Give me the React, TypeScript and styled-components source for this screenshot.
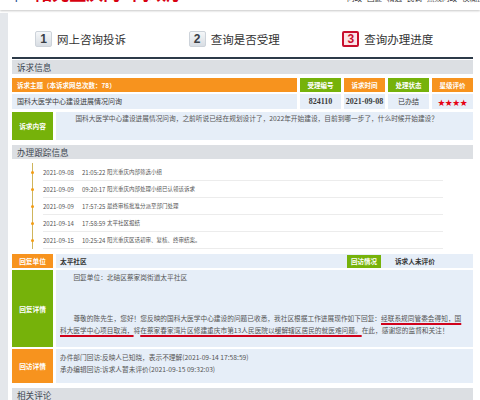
import React from 'react';
import styled, { createGlobalStyle } from 'styled-components';

const GlobalStyle = createGlobalStyle`
  html, body {
    margin: 0;
    padding: 0;
    background: #fff;
  }
  body {
    font-family: "Noto Sans CJK SC", "Noto Sans", sans-serif;
    color: #333;
    overflow: hidden;
  }
`;

const ORANGE = '#f7931e';
const GREEN = '#76b20a';
const PALE = '#e6eef8';

const TopBar = styled.header`
  position: relative;
  z-index: 2;
  height: 10px;
  overflow: hidden;
  display: flex;
  align-items: flex-end;
  background: #fff;
  box-shadow: 0 1px 2px rgba(0, 0, 0, 0.22);
`;

const Logo = styled.span`
  margin: 0 6px 8px 8px;
  font: bold 8px/9px "Liberation Sans", sans-serif;
  color: #1d4f91;
`;

const SiteTitle = styled.span`
  display: flex;
  gap: 12px;
  margin-bottom: 8px;
  font-size: 17px;
  line-height: 18px;
  font-weight: bold;
  color: #d7000f;
  white-space: nowrap;
`;

const Nav = styled.nav`
  margin-left: auto;
  margin-right: -12px;
  margin-bottom: 8px;
  display: flex;
  gap: 5px;
  font-size: 7.5px;
  line-height: 8px;
  color: #333;
  white-space: nowrap;
`;

const Page = styled.div`
  display: flex;
  margin-top: 3px;
`;

const Strip = styled.div`
  width: 8px;
  flex: none;
  background: #e4e7eb;
`;

const Main = styled.main`
  flex: 1;
  min-width: 0;
  padding: 0 7px 0 4px;
`;

const Steps = styled.div`
  display: grid;
  grid-template-columns: repeat(3, 1fr);
  align-items: center;
  height: 46px;
  box-sizing: border-box;
  padding-top: 7px;
  border-bottom: 2px solid #2c3a48;
`;

const Step = styled.div`
  display: flex;
  align-items: center;
  gap: 5px;
  padding-left: 23px;
`;

const StepNum = styled.span<{ $active?: boolean }>`
  width: 17px;
  height: 16px;
  box-sizing: border-box;
  display: flex;
  align-items: center;
  justify-content: center;
  border-radius: 2px;
  font: bold 12px/1 "Liberation Sans", sans-serif;
  color: ${p => (p.$active ? '#c8102e' : '#3a3f46')};
  background: ${p => (p.$active ? '#fce4e7' : 'linear-gradient(#f5f7f9, #d8dde3)')};
  border: ${p => (p.$active ? '2px solid #c8102e' : '1px solid #cdd3da')};
`;

const StepLabel = styled.span`
  font-size: 11.5px;
  line-height: 14px;
  color: #333;
`;

const SectionTitle = styled.h3<{ $mt: number }>`
  margin: ${p => p.$mt}px 0 0;
  height: 14px;
  line-height: 14px;
  padding-left: 5px;
  background: #dcdfe3;
  font-size: 8.6px;
  font-weight: normal;
  color: #3c4650;
`;

const InfoGrid = styled.div`
  display: grid;
  grid-template-columns: 1fr repeat(4, 41px);
  column-gap: 3px;
  row-gap: 2px;
  margin-top: 4px;
`;

const HeadCell = styled.div<{ $tone: 'orange' | 'green'; $left?: boolean }>`
  height: 14px;
  line-height: 14px;
  padding-left: ${p => (p.$left ? '5px' : '0')};
  text-align: ${p => (p.$left ? 'left' : 'center')};
  background: ${p => (p.$tone === 'orange' ? ORANGE : GREEN)};
  color: #fff;
  font-size: 6.5px;
  font-weight: bold;
  white-space: nowrap;
`;

const ValueCell = styled.div<{ $left?: boolean; $serif?: boolean; $stars?: boolean }>`
  height: 15px;
  line-height: 15px;
  padding-left: ${p => (p.$left ? '5px' : '0')};
  text-align: ${p => (p.$left ? 'left' : 'center')};
  background: ${PALE};
  color: ${p => (p.$stars ? '#e60012' : '#3a3a3a')};
  font-family: ${p => (p.$serif ? '"Liberation Serif", serif' : 'inherit')};
  font-size: ${p => (p.$serif ? '8px' : p.$stars ? '7.4px' : '7px')};
  font-weight: ${p => (p.$serif ? 'bold' : 'normal')};
  white-space: nowrap;
`;

const Row = styled.div<{ $h: number; $mt?: number }>`
  display: grid;
  grid-template-columns: 41px 1fr;
  column-gap: 3px;
  height: ${p => p.$h}px;
  margin-top: ${p => p.$mt ?? 0}px;
`;

const Label = styled.div<{ $tone: 'orange' | 'green' }>`
  display: flex;
  align-items: center;
  justify-content: center;
  background: ${p => (p.$tone === 'orange' ? ORANGE : GREEN)};
  color: #fff;
  font-size: 6.7px;
  font-weight: bold;
`;

const Cell = styled.div`
  background: ${PALE};
  font-size: 6.7px;
  color: #555;
  overflow: hidden;
`;

const AskText = styled(Cell)`
  padding: 2px 6px 0;
  line-height: 8px;
  text-indent: 2em;
  white-space: nowrap;
`;

const Timeline = styled.ul`
  list-style: none;
  margin: 4px 30px 0 20px;
  padding: 1px 0 0;
  border-left: 1px solid #cfb55c;
`;

const Event = styled.li`
  position: relative;
  margin-left: 10px;
  height: 17px;
  box-sizing: border-box;
  display: flex;
  align-items: center;
  border-bottom: 1px solid #ececec;
  font-size: 5.5px;
  color: #555;
  white-space: nowrap;

  &::before {
    content: '';
    position: absolute;
    left: -12px;
    top: 7px;
    width: 3px;
    height: 3px;
    border-radius: 50%;
    background: #f39c12;
  }
`;

const EventDate = styled.span`
  width: 39px;
  flex: none;
  font-size: 6px;
`;

const EventTime = styled.span`
  width: 25px;
  flex: none;
  font-size: 6px;
`;

const ReplyTable = styled.div`
  display: grid;
  row-gap: 2px;
  margin-top: 5px;
`;

const UnitCell = styled(Cell)`
  display: flex;
  align-items: center;
  padding-left: 4px;
  color: #333;
  font-weight: bold;
`;

const VisitButton = styled.span`
  margin-left: auto;
  width: 34px;
  height: 13px;
  line-height: 13px;
  text-align: center;
  background: ${GREEN};
  color: #fff;
  font-size: 6.5px;
`;

const Rating = styled.span`
  margin: 0 38px 0 14px;
  color: #333;
`;

const Detail = styled(Cell)`
  padding: 1px 4px 0;
  line-height: 12.5px;
  white-space: nowrap;

  p {
    margin: 0;
  }
  p + p {
    margin-top: 28px;
  }
`;

const Indent = styled.span`
  padding-left: 2em;
`;

const Mark = styled.span`
  text-decoration: underline;
  text-decoration-color: #d0021b;
  text-decoration-thickness: 1.6px;
  text-underline-offset: 2px;
`;

const Visits = styled(Cell)`
  padding: 2px 4px 0;
  line-height: 12px;
  white-space: nowrap;
`;

const steps = ['网上咨询投诉', '查询是否受理', '查询办理进度'];

const events = [
  ['2021-09-08', '21:05:22', '阳光重庆内部筛选小组'],
  ['2021-09-09', '09:20:17', '阳光重庆内部处理小组已认领该诉求'],
  ['2021-09-09', '17:57:25', '最终审核批准分派至部门处理'],
  ['2021-09-14', '17:58:59', '太平社区报结'],
  ['2021-09-15', '10:25:24', '阳光重庆区话初审、复核、终审结案。'],
];

const navItems = ['问政', '回复', '精选', '民调', '热线问政', '模糊搜索'];

export default function App() {
  return (
    <>
      <GlobalStyle />
      <TopBar>
        <Logo>cqnet</Logo>
        <SiteTitle>
          <span>阳光重庆网</span>
          <span>问政厅</span>
        </SiteTitle>
        <Nav>
          {navItems.map(n => (
            <span key={n}>{n}</span>
          ))}
        </Nav>
      </TopBar>
      <Page>
        <Strip />
        <Main>
          <Steps>
            {steps.map((s, i) => (
              <Step key={s}>
                <StepNum $active={i === 2}>{i + 1}</StepNum>
                <StepLabel>{s}</StepLabel>
              </Step>
            ))}
          </Steps>

          <SectionTitle $mt={1}>诉求信息</SectionTitle>
          <InfoGrid>
            <HeadCell $tone="orange" $left>诉求主题（本诉求网总次数：78）</HeadCell>
            <HeadCell $tone="green">受理编号</HeadCell>
            <HeadCell $tone="orange">诉求时间</HeadCell>
            <HeadCell $tone="green">处理状态</HeadCell>
            <HeadCell $tone="orange">星级评价</HeadCell>
            <ValueCell $left>国科大医学中心建设进展情况问询</ValueCell>
            <ValueCell $serif>824110</ValueCell>
            <ValueCell $serif>2021-09-08</ValueCell>
            <ValueCell>已办结</ValueCell>
            <ValueCell $stars>★★★★</ValueCell>
          </InfoGrid>
          <Row $h={28} $mt={3}>
            <Label $tone="green">诉求内容</Label>
            <AskText>
              国科大医学中心建设进展情况问询，之前听说已经在规划设计了，2022年开始建设，目前到哪一步了，什么时候开始建设？
            </AskText>
          </Row>

          <SectionTitle $mt={5}>办理跟踪信息</SectionTitle>
          <Timeline>
            {events.map(([d, t, text]) => (
              <Event key={d + t}>
                <EventDate>{d}</EventDate>
                <EventTime>{t}</EventTime>
                <span>{text}</span>
              </Event>
            ))}
          </Timeline>

          <ReplyTable>
            <Row $h={14}>
              <Label $tone="orange">回复单位</Label>
              <UnitCell>
                太平社区
                <VisitButton>回访情况</VisitButton>
                <Rating>诉求人未评价</Rating>
              </UnitCell>
            </Row>
            <Row $h={77}>
              <Label $tone="green">回复详情</Label>
              <Detail>
                <p>
                  <Indent>回复单位：北碚区蔡家岗街道太平社区</Indent>
                </p>
                <p>
                  <Indent>
                    尊敬的陈先生，您好！您反映的国科大医学中心建设的问题已收悉，我社区根据工作进展现作如下回复：
                  </Indent>
                  <Mark>经联系规同管委会得知，国</Mark>
                  <br />
                  <Mark>科大医学中心项目取消，</Mark>将
                  <Mark>在蔡家春家湾片区修建重庆市第13人民医院以缓解辖区居民的就医难问题。</Mark>
                  在此，感谢您的监督和关注！
                </p>
              </Detail>
            </Row>
            <Row $h={34}>
              <Label $tone="orange">回访详情</Label>
              <Visits>
                办件部门回访:反映人已知晓，表示不理解(2021-09-14 17:58:59)
                <br />
                承办编辑回访:诉求人暂未评价(2021-09-15 09:32:03)
              </Visits>
            </Row>
          </ReplyTable>

          <SectionTitle $mt={5}>相关评论</SectionTitle>
        </Main>
      </Page>
    </>
  );
}
